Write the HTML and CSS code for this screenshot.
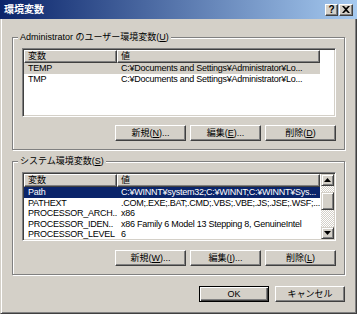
FILE: index.html
```html
<!DOCTYPE html>
<html lang="ja">
<head>
    <meta charset="UTF-8">
    <meta name="viewport" content="width=device-width, initial-scale=1.0">
    <title>環境変数</title>
    <link rel="stylesheet" href="styles.css">
</head>
<body>
    <div class="window">
        <div class="titlebar">
            <span class="title">環境変数</span>
            <div class="caption-buttons">
                <button class="cap-btn help">?</button>
                <button class="cap-btn close">
                    <svg width="8" height="7" viewBox="0 0 8 7"><path d="M0 0h2l2 2 2-2h2L5 3.5 8 7H6L4 5 2 7H0l3-3.5z" fill="#000"/></svg>
                </button>
            </div>
        </div>

        <div class="client">
            <fieldset class="group">
                <legend>Administrator のユーザー環境変数(<u>U</u>)</legend>
                <div class="group-body">
                    <div class="listview">
                        <div class="lv-main">
                            <div class="lv-header">
                                <span class="hd col-name">変数</span>
                                <span class="hd col-value">値</span>
                            </div>
                            <div class="lv-row sel-inactive">
                                <span class="col-name">TEMP</span>
                                <span class="col-value">C:¥Documents and Settings¥Administrator¥Lo...</span>
                            </div>
                            <div class="lv-row">
                                <span class="col-name">TMP</span>
                                <span class="col-value">C:¥Documents and Settings¥Administrator¥Lo...</span>
                            </div>
                        </div>
                    </div>
                    <div class="btn-row">
                        <button class="btn">新規(<u>N</u>)...</button>
                        <button class="btn">編集(<u>E</u>)...</button>
                        <button class="btn">削除(<u>D</u>)</button>
                    </div>
                </div>
            </fieldset>

            <fieldset class="group system">
                <legend>システム環境変数(<u>S</u>)</legend>
                <div class="group-body">
                    <div class="listview">
                        <div class="lv-main">
                            <div class="lv-header">
                                <span class="hd col-name">変数</span>
                                <span class="hd col-value">値</span>
                            </div>
                            <div class="lv-row sel">
                                <span class="col-name">Path</span>
                                <span class="col-value">C:¥WINNT¥system32;C:¥WINNT;C:¥WINNT¥Sys...</span>
                            </div>
                            <div class="lv-row">
                                <span class="col-name">PATHEXT</span>
                                <span class="col-value">.COM;.EXE;.BAT;.CMD;.VBS;.VBE;.JS;.JSE;.WSF;...</span>
                            </div>
                            <div class="lv-row">
                                <span class="col-name">PROCESSOR_ARCH..</span>
                                <span class="col-value">x86</span>
                            </div>
                            <div class="lv-row">
                                <span class="col-name">PROCESSOR_IDEN..</span>
                                <span class="col-value">x86 Family 6 Model 13 Stepping 8, GenuineIntel</span>
                            </div>
                            <div class="lv-row">
                                <span class="col-name">PROCESSOR_LEVEL</span>
                                <span class="col-value">6</span>
                            </div>
                        </div>
                        <div class="scrollbar">
                            <div class="sb-btn">
                                <svg width="7" height="4" viewBox="0 0 7 4"><path d="M3.5 0L7 4H0z" fill="#000"/></svg>
                            </div>
                            <div class="sb-track">
                                <div class="sb-thumb"></div>
                            </div>
                            <div class="sb-btn">
                                <svg width="7" height="4" viewBox="0 0 7 4"><path d="M0 0h7L3.5 4z" fill="#000"/></svg>
                            </div>
                        </div>
                    </div>
                    <div class="btn-row">
                        <button class="btn">新規(<u>W</u>)...</button>
                        <button class="btn">編集(<u>I</u>)...</button>
                        <button class="btn">削除(<u>L</u>)</button>
                    </div>
                </div>
            </fieldset>

            <div class="dialog-buttons">
                <button class="btn default">OK</button>
                <button class="btn">キャンセル</button>
            </div>
        </div>
    </div>
</body>
</html>
```

FILE: styles.css
```css
* {
    margin: 0;
    padding: 0;
    box-sizing: border-box;
}

body {
    width: 357px;
    height: 314px;
    overflow: hidden;
    background: #d4d0c8;
    color: #000;
    font-family: "Liberation Sans", "Noto Sans CJK JP", sans-serif;
    font-size: 9px;
}

.window {
    width: 357px;
    height: 314px;
    display: flex;
    flex-direction: column;
    background: #d4d0c8;
}

/* title bar */
.titlebar {
    flex: none;
    height: 19px;
    display: flex;
    align-items: center;
    justify-content: space-between;
    padding: 0 4px;
    background: linear-gradient(to right, #0a246a, #a6caf0);
}

.title {
    color: #fff;
    font-weight: bold;
    font-size: 10px;
    line-height: 12px;
}

.caption-buttons {
    display: flex;
    gap: 1px;
}

.cap-btn {
    width: 14px;
    height: 12px;
    display: flex;
    align-items: center;
    justify-content: center;
    background: #d4d0c8;
    border: 1px solid;
    border-color: #fff #404040 #404040 #fff;
    box-shadow: inset -1px -1px #808080;
    font-family: "Liberation Sans", sans-serif;
    font-size: 10px;
    font-weight: bold;
    line-height: 1;
    color: #000;
}

.cap-btn.help {
    width: 13px;
}

/* dialog body */
.client {
    flex: 1;
    display: flex;
    flex-direction: column;
    padding: 0 11px;
    border: 1px solid;
    border-top: 0;
    border-color: #d4d0c8 #404040 #404040 #d4d0c8;
    box-shadow: inset 1px 0 #fff, inset -1px -1px #808080;
}

.group {
    margin-top: 12px;
    border: 1px solid #808080;
    box-shadow: inset 1px 1px #fff, 1px 1px #fff;
    padding: 0;
    min-width: 0;
}

.group.system {
    margin-top: 5px;
}

.group legend {
    margin-left: 5px;
    padding: 0 2px;
    line-height: 12px;
    background: #d4d0c8;
    white-space: nowrap;
}

.group-body {
    padding: 5px 8px 8px 9px;
}

.system .btn-row {
    margin-top: 9px;
}

/* list view */
.listview {
    height: 69px;
    display: flex;
    background: #fff;
    border: 1px solid;
    border-color: #808080 #fff #fff #808080;
    box-shadow: inset 1px 1px #404040, inset -1px -1px #d4d0c8;
    padding: 1px;
    overflow: hidden;
}

.lv-main {
    flex: 1;
    min-width: 0;
    overflow: hidden;
}

.lv-header {
    display: flex;
    height: 13px;
}

.lv-header .hd {
    display: block;
    height: 13px;
    line-height: 11px;
    background: #d4d0c8;
    border: 1px solid;
    border-color: #fff #404040 #404040 #fff;
    box-shadow: inset -1px -1px #808080;
    padding-left: 3px;
}

.lv-row {
    display: flex;
    width: 296px;
    height: 10.5px;
    line-height: 10.5px;
    letter-spacing: -0.25px;
}

.lv-row .col-name,
.lv-row .col-value {
    white-space: nowrap;
    overflow: hidden;
    padding-left: 4px;
}

.col-name {
    width: 93px;
    flex: none;
}

.col-value {
    width: 203px;
    flex: none;
}

.lv-row.sel-inactive {
    background: #d4d0c8;
}

.lv-row.sel {
    background: #0a246a;
    color: #fff;
}

/* scrollbar */
.scrollbar {
    width: 13px;
    flex: none;
    display: flex;
    flex-direction: column;
}

.sb-btn {
    height: 12px;
    flex: none;
    display: flex;
    align-items: center;
    justify-content: center;
    background: #d4d0c8;
    border: 1px solid;
    border-color: #d4d0c8 #404040 #404040 #d4d0c8;
    box-shadow: inset 1px 1px #fff, inset -1px -1px #808080;
}

.sb-track {
    flex: 1;
    padding-top: 6px;
    background: repeating-conic-gradient(#fff 0 25%, #d4d0c8 0 50%) 0 0 / 2px 2px;
}

.sb-thumb {
    height: 18px;
    background: #d4d0c8;
    border: 1px solid;
    border-color: #d4d0c8 #404040 #404040 #d4d0c8;
    box-shadow: inset 1px 1px #fff, inset -1px -1px #808080;
}

/* buttons */
.btn-row {
    display: flex;
    justify-content: flex-end;
    gap: 4px;
    margin-top: 8px;
}

.btn {
    width: 71px;
    height: 16px;
    background: #d4d0c8;
    border: 1px solid;
    border-color: #fff #404040 #404040 #fff;
    box-shadow: inset -1px -1px #808080;
    font-family: "Liberation Sans", "Noto Sans CJK JP", sans-serif;
    font-size: 9px;
    line-height: 13px;
    color: #000;
    text-align: center;
}

.dialog-buttons {
    display: flex;
    justify-content: flex-end;
    gap: 6px;
    margin-top: 11px;
}

.dialog-buttons .btn {
    width: 70px;
}

.btn.default {
    border: 1px solid #000;
    box-shadow: inset 1px 1px #fff, inset -1px -1px #404040, inset -2px -2px #808080;
}
```
